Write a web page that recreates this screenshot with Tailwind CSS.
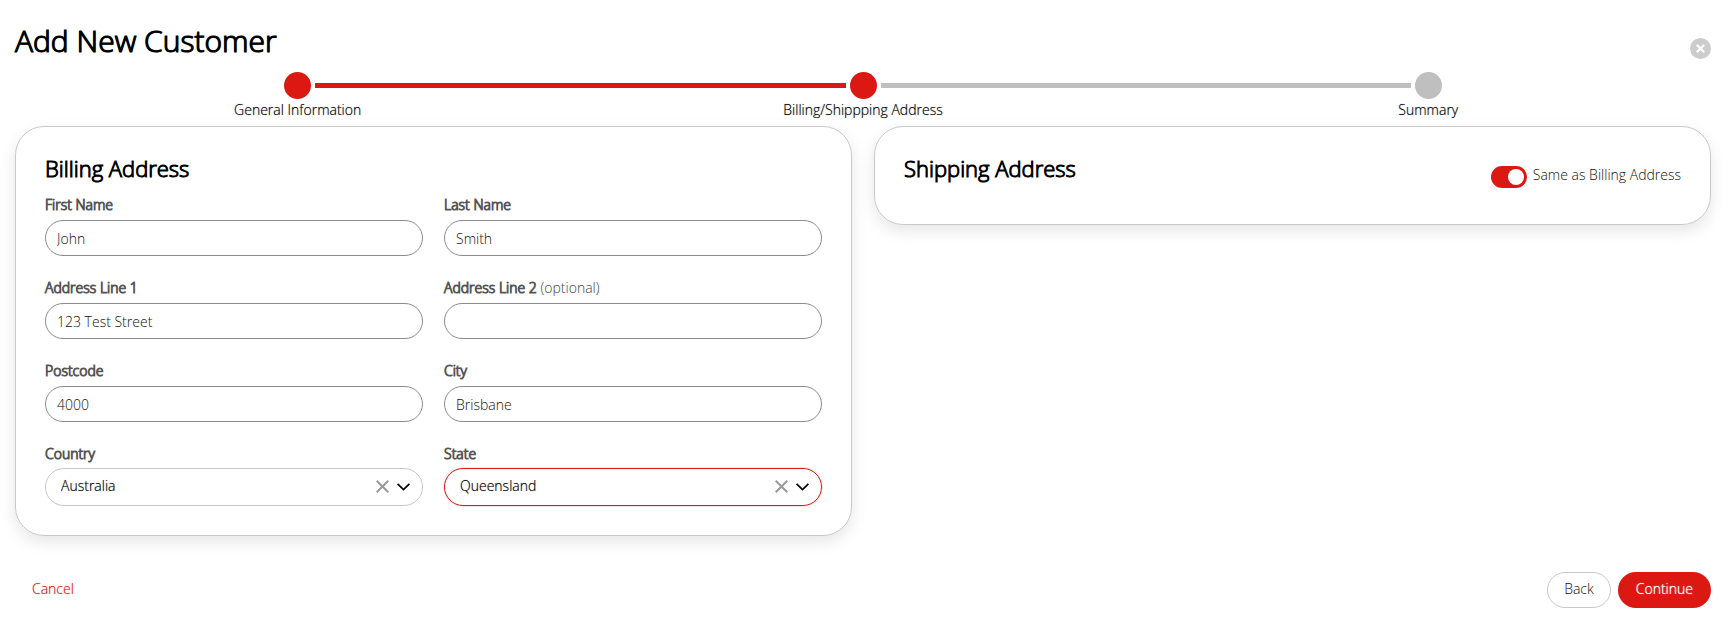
<!DOCTYPE html>
<html lang="en">
<head>
    <meta charset="UTF-8">
    <meta name="viewport" content="width=device-width, initial-scale=1.0">
    <script src="https://cdn.jsdelivr.net/npm/@tailwindcss/browser@4"></script>
    <title>Add New Customer</title>
</head>
<body class="bg-white pl-[15px] pr-3 font-['Open_Sans',sans-serif] text-sm font-light text-[#111]">

    <header class="flex items-end justify-between pt-5 pb-[10px]">
        <h1 class="text-[30px] leading-[42px] text-black [-webkit-text-stroke:1px] text-shadow-[0_0_1px_#000]">Add New Customer</h1>
        <button type="button" aria-label="Close" class="mb-[3px] flex size-[21px] items-center justify-center rounded-full bg-[#ccc]">
            <svg class="size-[9px]" viewBox="0 0 9 9" fill="none" stroke="#fff" stroke-width="2.2"><path d="M.8.8l7.4 7.4M8.2.8L.8 8.2"/></svg>
        </button>
    </header>

    <!-- steps -->
    <ol class="mb-[5px] grid grid-cols-3 text-black text-shadow-[0_0_1px_rgba(0,0,0,0.5)]">
        <li>
            <div class="flex items-center gap-[4px]">
                <span class="h-[5px] flex-1"></span>
                <span class="size-[27px] rounded-full bg-[#db1812]"></span>
                <span class="h-[5px] flex-1 bg-[#db1812]"></span>
            </div>
            <p class="text-center leading-[22px]">General Information</p>
        </li>
        <li>
            <div class="flex items-center gap-[4px]">
                <span class="h-[5px] flex-1 bg-[#db1812]"></span>
                <span class="size-[27px] rounded-full bg-[#db1812]"></span>
                <span class="h-[5px] flex-1 bg-[#bfbfbf]"></span>
            </div>
            <p class="text-center leading-[22px]">Billing/Shippping Address</p>
        </li>
        <li>
            <div class="flex items-center gap-[4px]">
                <span class="h-[5px] flex-1 bg-[#bfbfbf]"></span>
                <span class="size-[27px] rounded-full bg-[#bfbfbf]"></span>
                <span class="h-[5px] flex-1"></span>
            </div>
            <p class="text-center leading-[22px]">Summary</p>
        </li>
    </ol>

    <form>
        <div class="grid grid-cols-2 items-start gap-[22px]">

            <section class="rounded-[29px] border border-[#c8c8c8] px-[29px] pt-7 pb-[29px] shadow-[0_6px_16px_rgba(0,0,0,0.1)]">
                <h2 class="mb-[14px] text-[22px] leading-[26px] text-black [-webkit-text-stroke:1px]">Billing Address</h2>
                <div class="grid grid-cols-2 gap-x-[21px] gap-y-[22px]">
                    <div>
                        <label for="firstName" class="mb-[5px] block leading-5 text-[#555] [-webkit-text-stroke:1px]">First Name</label>
                        <input type="text" id="firstName" value="John" class="h-9 w-full rounded-full border border-[#8c8c8c] px-[11px]">
                    </div>
                    <div>
                        <label for="lastName" class="mb-[5px] block leading-5 text-[#555] [-webkit-text-stroke:1px]">Last Name</label>
                        <input type="text" id="lastName" value="Smith" class="h-9 w-full rounded-full border border-[#8c8c8c] px-[11px]">
                    </div>
                    <div>
                        <label for="address1" class="mb-[5px] block leading-5 text-[#555] [-webkit-text-stroke:1px]">Address Line 1</label>
                        <input type="text" id="address1" value="123 Test Street" class="h-9 w-full rounded-full border border-[#8c8c8c] px-[11px]">
                    </div>
                    <div>
                        <label for="address2" class="mb-[5px] block leading-5"><span class="text-[#555] [-webkit-text-stroke:1px]">Address Line 2</span> <span class="text-[#444]">(optional)</span></label>
                        <input type="text" id="address2" class="h-9 w-full rounded-full border border-[#8c8c8c] px-[11px]">
                    </div>
                    <div>
                        <label for="postcode" class="mb-[5px] block leading-5 text-[#555] [-webkit-text-stroke:1px]">Postcode</label>
                        <input type="text" id="postcode" value="4000" class="h-9 w-full rounded-full border border-[#8c8c8c] px-[11px]">
                    </div>
                    <div>
                        <label for="city" class="mb-[5px] block leading-5 text-[#555] [-webkit-text-stroke:1px]">City</label>
                        <input type="text" id="city" value="Brisbane" class="h-9 w-full rounded-full border border-[#8c8c8c] px-[11px]">
                    </div>
                    <div>
                        <label for="country" class="mb-1 block leading-5 text-[#555] [-webkit-text-stroke:1px]">Country</label>
                        <div class="relative">
                            <select id="country" class="block h-[38px] w-full appearance-none rounded-full border border-[#c8c8c8] pr-16 pb-[2px] pl-[15px] text-black text-shadow-[0_0_1px_rgba(0,0,0,0.5)]">
                                <option>Australia</option>
                            </select>
                            <button type="button" aria-label="Clear country" class="absolute top-3 right-[34px]">
                                <svg class="size-[13px]" viewBox="0 0 13 13" fill="none" stroke="#999" stroke-width="2"><path d="M.7.7l11.6 11.6M12.3.7L.7 12.3"/></svg>
                            </button>
                            <svg class="pointer-events-none absolute top-[15px] right-[13px] h-2 w-[13px]" viewBox="0 0 13 8" fill="none" stroke="#000" stroke-width="1.7"><path d="M.6.9l5.9 5.7L12.4.9"/></svg>
                        </div>
                    </div>
                    <div>
                        <label for="state" class="mb-1 block leading-5 text-[#555] [-webkit-text-stroke:1px]">State</label>
                        <div class="relative">
                            <select id="state" class="block h-[38px] w-full appearance-none rounded-full border border-[#db1812] pr-16 pb-[2px] pl-[15px] text-black shadow-[0_0_2px_rgba(219,24,18,0.4)] text-shadow-[0_0_1px_rgba(0,0,0,0.5)]">
                                <option>Queensland</option>
                            </select>
                            <button type="button" aria-label="Clear state" class="absolute top-3 right-[34px]">
                                <svg class="size-[13px]" viewBox="0 0 13 13" fill="none" stroke="#999" stroke-width="2"><path d="M.7.7l11.6 11.6M12.3.7L.7 12.3"/></svg>
                            </button>
                            <svg class="pointer-events-none absolute top-[15px] right-[13px] h-2 w-[13px]" viewBox="0 0 13 8" fill="none" stroke="#000" stroke-width="1.7"><path d="M.6.9l5.9 5.7L12.4.9"/></svg>
                        </div>
                    </div>
                </div>
            </section>

            <section class="flex items-start justify-between rounded-[29px] border border-[#c8c8c8] px-[29px] py-7 shadow-[0_6px_16px_rgba(0,0,0,0.1)]">
                <h2 class="text-[22px] leading-[26px] text-black [-webkit-text-stroke:1px]">Shipping Address</h2>
                <div class="mt-[11px] mb-2 flex gap-[6px]">
                    <input type="checkbox" id="sameAddress" checked class="flex h-[22px] w-9 appearance-none items-center rounded-full bg-[#bfbfbf] px-[3px] before:size-4 before:rounded-full before:bg-white checked:justify-end checked:bg-[#db1812]">
                    <label for="sameAddress" class="leading-[18px]">Same as Billing Address</label>
                </div>
            </section>
        </div>

        <footer class="mt-9 flex items-center gap-[7px]">
            <button type="button" class="mr-auto h-9 px-[17px] pb-[2px] text-[#db1812] text-shadow-[0_0_1px_rgba(219,24,18,0.5)]">Cancel</button>
            <button type="button" class="h-9 rounded-full border border-[#c8c8c8] px-4 pb-[2px]">Back</button>
            <button type="submit" class="h-9 rounded-full bg-[#db1812] px-[18px] pb-[2px] text-white text-shadow-[0_0_1px_#fff]">Continue</button>
        </footer>
    </form>

</body>
</html>
